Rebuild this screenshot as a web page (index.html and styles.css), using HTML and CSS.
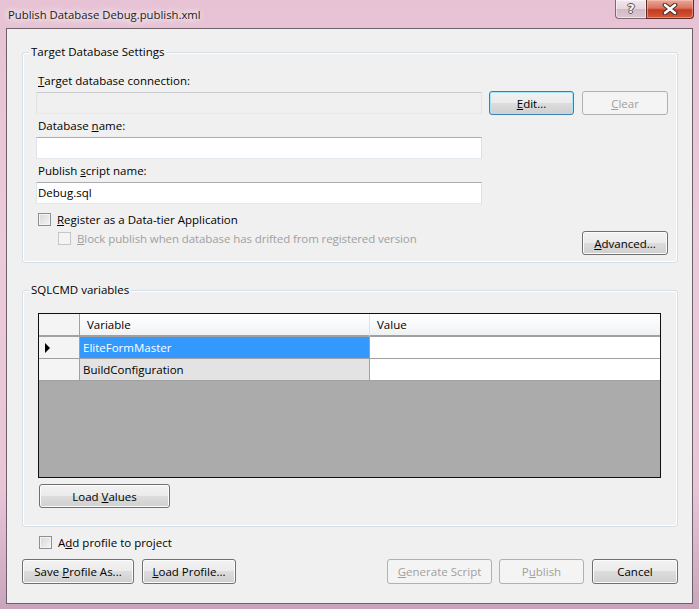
FILE: index.html
```html
<!DOCTYPE html>
<html lang="en">
<head>
    <meta charset="UTF-8">
    <meta name="viewport" content="width=device-width, initial-scale=1.0">
    <title>Publish Database Debug.publish.xml</title>
    <link rel="stylesheet" href="styles.css">
</head>
<body>
    <div class="window">
        <div class="titlebar">
            <span class="title">Publish Database Debug.publish.xml</span>
            <div class="caption-buttons">
                <div class="cap-btn help"><span>?</span></div>
                <div class="cap-btn close">
                    <svg width="18" height="12" viewBox="0 0 18 12">
                        <path d="M4 2 L14 10 M14 2 L4 10" stroke="#4a2a26" stroke-width="4.6" stroke-linecap="round"/>
                        <path d="M4 2 L14 10 M14 2 L4 10" stroke="#ffffff" stroke-width="2.6" stroke-linecap="round"/>
                    </svg>
                </div>
            </div>
        </div>

        <div class="client">
            <div class="group group-target">
                <span class="group-title">Target Database Settings</span>

                <div class="label first"><u>T</u>arget database connection:</div>
                <div class="row connection-row">
                    <div class="textbox disabled"></div>
                    <button class="btn default btn-edit"><u>E</u>dit...</button>
                    <button class="btn btn-clear" disabled><u>C</u>lear</button>
                </div>

                <div class="label">Database <u>n</u>ame:</div>
                <div class="textbox"></div>

                <div class="label">Publish <u>s</u>cript name:</div>
                <div class="textbox">Debug.sql</div>

                <div class="check-row register">
                    <span class="check"></span>
                    <span><u>R</u>egister as a Data-tier Application</span>
                </div>
                <div class="row block-row">
                    <div class="check-row sub disabled">
                        <span class="check"></span>
                        <span><u>B</u>lock publish when database has drifted from registered version</span>
                    </div>
                    <button class="btn btn-advanced"><u>A</u>dvanced...</button>
                </div>
            </div>

            <div class="group group-sqlcmd">
                <span class="group-title">SQLCMD variables</span>

                <div class="grid">
                    <div class="grid-row grid-head">
                        <div class="cell rowhead"></div>
                        <div class="cell var">Variable</div>
                        <div class="cell val">Value</div>
                    </div>
                    <div class="grid-row">
                        <div class="cell rowhead"><span class="arrow"></span></div>
                        <div class="cell var selected">EliteFormMaster</div>
                        <div class="cell val"></div>
                    </div>
                    <div class="grid-row">
                        <div class="cell rowhead"></div>
                        <div class="cell var readonly">BuildConfiguration</div>
                        <div class="cell val"></div>
                    </div>
                </div>

                <button class="btn btn-load">Load <u>V</u>alues</button>
            </div>

            <div class="check-row add-profile">
                <span class="check"></span>
                <span>A<u>d</u>d profile to project</span>
            </div>

            <div class="footer">
                <button class="btn btn-save">Save <u>P</u>rofile As...</button>
                <button class="btn btn-loadprofile"><u>L</u>oad Profile...</button>
                <div class="spacer"></div>
                <button class="btn btn-generate" disabled><u>G</u>enerate Script</button>
                <button class="btn btn-publish" disabled>P<u>u</u>blish</button>
                <button class="btn btn-cancel">Cancel</button>
            </div>
        </div>
    </div>
</body>
</html>
```

FILE: styles.css
```css
*{
    box-sizing: border-box;
}
body{
    margin: 0;
    font-family: "Open Sans", "Noto Sans", sans-serif;
    font-size: 11.5px;
    color: #000;
}
.window{
    width: 699px;
    height: 609px;
    display: flex;
    flex-direction: column;
    padding: 0 6px 5px 6px;
    background: linear-gradient(180deg, #e6c2d4 0%, #ebcadb 40%, #e8c6d8 80%, #c9a5bb 100%);
}

/* title bar */
.titlebar{
    height: 28px;
    display: flex;
    align-items: flex-start;
}
.title{
    margin: 7px 0 0 2px;
    font-size: 11.3px;
    line-height: 16px;
    color: #1b1b1b;
    text-shadow: 0 0 6px #fff, 0 0 10px #fff, 0 0 14px rgba(255,255,255,0.8);
}
.caption-buttons{
    margin-left: auto;
    display: flex;
    margin-right: -1px;
}
.cap-btn{
    height: 19px;
    border: 1px solid #7d6a74;
    border-top: 0;
    display: flex;
    align-items: center;
    justify-content: center;
}
.cap-btn.help{
    width: 31px;
    border-radius: 0 0 0 4px;
    border-right: 0;
    background: linear-gradient(180deg, #f4e6ed 0%, #e8d3de 50%, #d3b9c7 51%, #dcc6d1 100%);
    box-shadow: inset 0 0 0 1px rgba(255,255,255,0.5);
}
.cap-btn.help span{
    font-family: "DejaVu Sans", sans-serif;
    font-weight: bold;
    font-size: 13px;
    color: #f4f4f4;
    text-shadow: -1px 0 #555, 1px 0 #555, 0 -1px #555, 0 1px #555;
    margin-top: -1px;
}
.cap-btn.close{
    width: 48px;
    border-color: #5e2a24;
    border-radius: 0 0 4px 0;
    background: linear-gradient(180deg, #e9a99a 0%, #d9735c 45%, #c53a22 55%, #d25a3c 100%);
    box-shadow: inset 0 0 0 1px rgba(255,210,200,0.45);
}

/* client area */
.client{
    flex: 1;
    background: #f0f0f0;
    border: 1px solid #6e6068;
    padding: 23px 14px 0 15px;
}
.group{
    position: relative;
    border: 1px solid #d5dfe5;
    border-radius: 3px;
    box-shadow: inset 0 0 0 1px #fff;
}
.group-title{
    position: absolute;
    top: -9px;
    left: 6px;
    padding: 0 2px;
    line-height: 15px;
    background: #f0f0f0;
}
.group-target{
    height: 211px;
    padding: 20px 9px 0 13px;
}
.group-sqlcmd{
    height: 237px;
    margin-top: 27px;
    padding: 22px 0 0 15px;
}

.label{
    line-height: 15px;
    padding-left: 2px;
    margin-top: 3px;
}
.textbox + .label{
    margin-top: 4px;
}
.label.first{
    margin-top: 0;
}
.row{
    display: flex;
    align-items: center;
}
.connection-row{
    margin-top: 3px;
}
.textbox{
    width: 446px;
    height: 22px;
    margin-top: 4px;
    background: #fff;
    border: 1px solid;
    border-color: #abadb3 #dbdfe6 #e3e9ef #e2e3ea;
    padding-left: 1px;
    line-height: 20px;
}
.row .textbox{
    margin-top: 0;
}
.textbox.disabled{
    background: #f0f0f0;
    border-color: #c9cbcf #e1e2e4 #e6e8ea #e1e2e4;
}

/* buttons */
.btn{
    height: 24px;
    padding: 0;
    font-family: inherit;
    font-size: 11.5px;
    color: #000;
    border: 1px solid #707070;
    border-radius: 3px;
    background: linear-gradient(180deg, #f2f2f2 0%, #ebebeb 49%, #dddddd 50%, #cfcfcf 100%);
    box-shadow: inset 0 0 0 1px #fcfcfc;
}
.btn.default{
    border-color: #3c7fb1;
    box-shadow: inset 0 0 0 1px #a6e4fb;
}
.btn:disabled{
    color: #a0a0a0;
    border-color: #adb2b5;
    background: #f4f4f4;
    box-shadow: none;
}
.btn-edit{
    width: 85px;
    margin-left: 7px;
}
.btn-clear{
    width: 86px;
    margin-left: 8px;
}
.btn-advanced{
    width: 86px;
    margin-left: auto;
}
.btn-load{
    width: 131px;
    margin: 6px 0 0 1px;
}

/* checkboxes */
.check-row{
    display: flex;
    align-items: center;
    height: 13px;
    line-height: 15px;
}
.check{
    width: 13px;
    height: 13px;
    margin-right: 6px;
    border: 1px solid #8e8f8f;
    background: linear-gradient(135deg, #d4d6d8 0%, #f6f6f6 100%);
    box-shadow: inset 0 0 0 1px #f4f4f4;
}
.check-row.disabled{
    color: #a0a0a0;
}
.check-row.disabled .check{
    border-color: #c6c6c6;
    background: #f4f4f4;
    box-shadow: none;
}
.register{
    margin: 9px 0 0 2px;
}
.block-row{
    align-items: flex-start;
    margin-top: 5px;
}
.check-row.sub{
    margin-left: 22px;
    margin-top: 1px;
}
.check-row.sub span:last-child{
    letter-spacing: -0.1px;
}
.add-profile{
    margin: 9px 0 0 17px;
}

/* grid */
.grid{
    width: 623px;
    height: 165px;
    border: 1px solid #101010;
    background: #ababab;
}
.grid-row{
    display: grid;
    grid-template-columns: 41px 290px 290px;
    height: 22px;
}
.cell{
    border-right: 1px solid #a0a0a0;
    border-bottom: 1px solid #a0a0a0;
    line-height: 21px;
    padding-left: 3px;
    background: #fff;
}
.cell.val{
    border-right: 0;
}
.grid-head{
    height: 23px;
}
.grid-head .cell{
    background: linear-gradient(180deg, #ffffff 0%, #f7f8f9 60%, #f0f1f2 100%);
    border-right-color: #e0e2e4;
    border-bottom: 2px solid #a0a0a0;
    padding-left: 7px;
}
.cell.rowhead{
    background: #f4f4f4;
    display: flex;
    align-items: center;
    padding-left: 6px;
}
.grid-head .cell.rowhead{
    border-right-color: #a0a0a0;
}
.arrow{
    width: 0;
    height: 0;
    border-left: 5px solid #000;
    border-top: 5px solid transparent;
    border-bottom: 5px solid transparent;
}
.cell.selected{
    background: #3399ff;
    color: #fff;
}
.cell.readonly{
    background: #e3e3e3;
}

/* footer */
.footer{
    display: flex;
    margin-top: 10px;
}
.footer .btn{
    height: 25px;
}
.spacer{
    flex: 1;
}
.btn-save{
    width: 112px;
}
.btn-loadprofile{
    width: 94px;
    margin-left: 8px;
}
.btn-generate{
    width: 105px;
}
.btn-publish{
    width: 85px;
    margin-left: 7px;
}
.btn-cancel{
    width: 86px;
    margin-left: 8px;
}
```
